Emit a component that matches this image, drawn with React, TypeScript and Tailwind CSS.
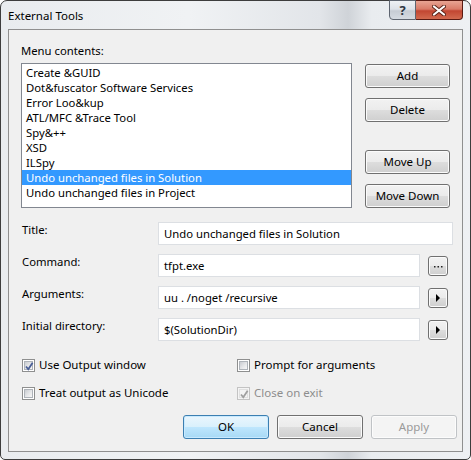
import React from "react";

const items = [
  "Create &GUID",
  "Dot&fuscator Software Services",
  "Error Loo&kup",
  "ATL/MFC &Trace Tool",
  "Spy&++",
  "XSD",
  "ILSpy",
  "Undo unchanged files in Solution",
  "Undo unchanged files in Project",
];

function PushButton({
  label,
  kind = "normal",
  className = "",
}: {
  label: string;
  kind?: "normal" | "default" | "disabled";
  className?: string;
}) {
  const skin =
    kind === "default"
      ? "border-[#3c7fb1] bg-[linear-gradient(180deg,#eaf6fd_0%,#d9f0fc_50%,#bee6fd_51%,#a7d9f5_100%)] text-black shadow-[inset_0_0_0_1px_#c8eaff]"
      : kind === "disabled"
      ? "border-[#c0c3c6] bg-[#f4f4f4] text-[#9a9a9a] shadow-[inset_0_0_0_1px_#fcfcfc]"
      : "border-[#707070] bg-[linear-gradient(180deg,#f2f2f2_0%,#ebebeb_50%,#dddddd_51%,#cfcfcf_100%)] text-black shadow-[inset_0_0_0_1px_#fbfbfb]";
  return (
    <div
      className={`flex h-[24px] items-center justify-center rounded-[3px] border text-[11.5px] leading-[14px] ${skin} ${className}`}
    >
      {label}
    </div>
  );
}

function SmallButton({ children }: { children: React.ReactNode }) {
  return (
    <div className="flex h-[20px] w-[20px] items-center justify-center rounded-[3px] border border-[#707070] bg-[linear-gradient(180deg,#f2f2f2_0%,#ebebeb_50%,#dddddd_51%,#cfcfcf_100%)] shadow-[inset_0_0_0_1px_#fbfbfb]">
      {children}
    </div>
  );
}

function Arrow() {
  return (
    <svg width="5" height="8" viewBox="0 0 5 8">
      <path d="M0 0 L4 4 L0 8 Z" fill="#000" />
    </svg>
  );
}

function Dots() {
  return (
    <svg width="9" height="3" viewBox="0 0 9 3">
      <rect x="0" y="1" width="1.5" height="1.5" fill="#222" />
      <rect x="3.5" y="1" width="1.5" height="1.5" fill="#222" />
      <rect x="7" y="1" width="1.5" height="1.5" fill="#222" />
    </svg>
  );
}

function CheckBox({
  label,
  checked = false,
  disabled = false,
}: {
  label: string;
  checked?: boolean;
  disabled?: boolean;
}) {
  return (
    <div className="flex items-center">
      <div
        className={`relative flex h-[13px] w-[13px] items-center justify-center border ${
          disabled ? "border-[#c3c3c3] bg-[#f4f4f4]" : "border-[#8e8f8f] bg-white"
        }`}
      >
        <div
          className={`h-[9px] w-[9px] border ${
            disabled
              ? "border-[#e0e0e0] bg-[#f4f4f4]"
              : "border-[#aeb3b9] bg-[linear-gradient(135deg,#c9ccd1_0%,#e6e7e9_55%,#f7f7f7_100%)]"
          }`}
        />
        {checked && (
          <svg
            className="absolute left-[1px] top-[1px]"
            width="11"
            height="11"
            viewBox="0 0 11 11"
          >
            <path
              d="M2 5.5 L4.3 8.3 L8.6 1.8"
              fill="none"
              stroke={disabled ? "#a0a0a0" : "#4a5f97"}
              strokeWidth="1.8"
            />
          </svg>
        )}
      </div>
      <span
        className={`ml-[4px] text-[11.5px] leading-[14px] ${
          disabled ? "text-[#8d8d8d]" : "text-black"
        }`}
      >
        {label}
      </span>
    </div>
  );
}

function Field({
  label,
  value,
  wide = false,
  button,
}: {
  label: string;
  value: string;
  wide?: boolean;
  button?: React.ReactNode;
}) {
  return (
    <div className="flex h-[23px] items-start">
      <div className="w-[137px] pl-[1px] pt-[1px] text-[11.3px] leading-[14px]">
        {label}
      </div>
      <div
        className={`flex h-[23px] items-center border border-[#dcdfe3] bg-white pl-[5px] text-[11.3px] leading-[14px] ${
          wide ? "w-[295px]" : "w-[262px]"
        }`}
      >
        {value}
      </div>
      {button && <div className="ml-[8px] mt-[2px]">{button}</div>}
    </div>
  );
}

export default function App() {
  return (
    <div className="h-[460px] w-[471px] bg-white font-['Noto_Sans',sans-serif] text-black">
      <div className="relative flex h-[460px] w-[471px] flex-col rounded-t-[7px] rounded-b-[5px] border border-[#3d3d3d] bg-[linear-gradient(90deg,#e9ecef_0%,#f0f2f4_40%,#e2e5e9_68%,#cfd3d8_74%,#e9ecef_79%,#eef0f3_100%)] px-[7px] pb-[7px]">
        {/* caption */}
        <div className="flex h-[28px] items-center text-[11.5px] leading-[14px]">
          <span className="mt-[2px]">External Tools</span>
        </div>

        {/* caption buttons */}
        <div className="absolute right-[7px] top-[-1px] flex h-[20px]">
          <div className="flex w-[27px] items-center justify-center rounded-bl-[4px] border border-[#5e6570] bg-[linear-gradient(180deg,#eef1f4_0%,#dde2e8_45%,#c6ccd4_55%,#d5dbe2_100%)] text-[13px] font-bold leading-none text-[#2c3440]">
            ?
          </div>
          <div className="flex w-[47px] items-center justify-center rounded-br-[4px] border border-l-0 border-[#5a1a12] bg-[linear-gradient(180deg,#e8a493_0%,#d97b68_45%,#c24632_55%,#d26a4f_100%)]">
            <svg width="14" height="11" viewBox="0 0 14 11">
              <path
                d="M2 1.5 L12 9.5 M12 1.5 L2 9.5"
                stroke="#5a2419"
                strokeWidth="4"
                strokeLinecap="round"
              />
              <path
                d="M2 1.5 L12 9.5 M12 1.5 L2 9.5"
                stroke="#ffffff"
                strokeWidth="2.2"
                strokeLinecap="round"
              />
            </svg>
          </div>
        </div>

        {/* client area */}
        <div className="flex flex-1 flex-col border border-[#8f8f8f] bg-[#f0f0f0] pl-[12px] pt-[14px] text-[11.3px]">
          <div className="flex">
            <div className="w-[331px]">
              <div className="h-[19px] leading-[14px]">Menu contents:</div>
              <div className="h-[145px] border border-[#828790] bg-white pt-[1px]">
                {items.map((t, i) => (
                  <div
                    key={t}
                    className={`flex h-[15px] items-center pl-[4px] leading-[14px] ${
                      i === 7 ? "bg-[#3399ff] text-white" : "text-black"
                    }`}
                  >
                    {t}
                  </div>
                ))}
              </div>
            </div>
            <div className="ml-[13px] flex w-[85px] flex-col pt-[20px]">
              <PushButton label="Add" />
              <PushButton label="Delete" className="mt-[10px]" />
              <PushButton label="Move Up" className="mt-[28px]" />
              <PushButton label="Move Down" className="mt-[10px]" />
            </div>
          </div>

          <div className="mt-[14px] flex flex-col gap-[9px]">
            <Field label="Title:" value="Undo unchanged files in Solution" wide />
            <Field
              label="Command:"
              value="tfpt.exe"
              button={
                <SmallButton>
                  <Dots />
                </SmallButton>
              }
            />
            <Field
              label="Arguments:"
              value="uu . /noget /recursive"
              button={
                <SmallButton>
                  <Arrow />
                </SmallButton>
              }
            />
            <Field
              label="Initial directory:"
              value="$(SolutionDir)"
              button={
                <SmallButton>
                  <Arrow />
                </SmallButton>
              }
            />
          </div>

          <div className="mt-[17px] grid grid-cols-[215px_1fr] gap-y-[14px] pl-[1px]">
            <CheckBox label="Use Output window" checked />
            <CheckBox label="Prompt for arguments" />
            <CheckBox label="Treat output as Unicode" />
            <CheckBox label="Close on exit" checked disabled />
          </div>

          <div className="mt-[15px] flex gap-[8px] pl-[162px]">
            <PushButton label="OK" kind="default" className="w-[86px]" />
            <PushButton label="Cancel" className="w-[86px]" />
            <PushButton label="Apply" kind="disabled" className="w-[86px]" />
          </div>
        </div>
      </div>
    </div>
  );
}
